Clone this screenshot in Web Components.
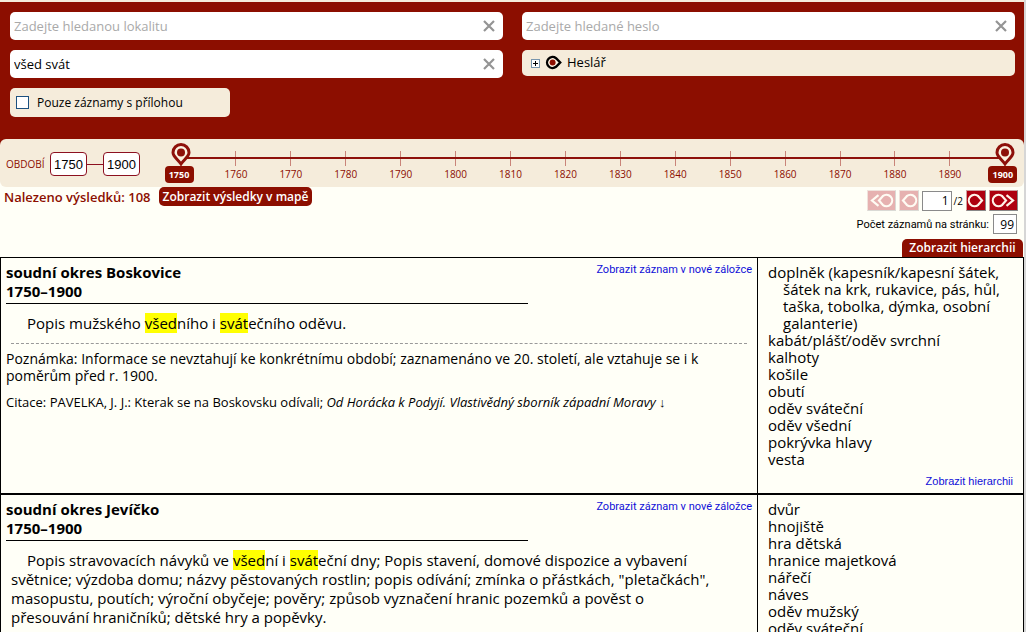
<!DOCTYPE html>
<html lang="cs">
<head>
<meta charset="utf-8">
<title>Výsledky hledání</title>
<style>
html { background: #d6d6d6; }
body { margin: 0 2px 0 0; height: 100vh; overflow: hidden; background: #fffff7; color: #000;
  font-family: "Open Sans", "Noto Sans", sans-serif; font-size: 15px; --red: #8c0e00; --cream: #f5ecdb; }
</style>
</head>
<body>
<archive-app></archive-app>
<script>
const define = (name, html, setup) => customElements.define(name, class extends HTMLElement {
  connectedCallback() {
    if (this.shadowRoot) return;
    const root = this.attachShadow({ mode: 'open' });
    root.innerHTML = '<style>*{box-sizing:border-box}:host{display:block}</style>' + html;
    if (setup) setup(this, root);
  }
});

define('search-field', `
<style>
.box { display: flex; align-items: center; height: 28px; padding: 0 6px 0 4px; background: #fff; border-radius: 5px; }
input { flex: 1; min-width: 0; border: 0; padding: 0; outline: 0; background: none; color: #000; font-family: inherit; font-size: 13px; }
input::placeholder { color: #a9a9a9; opacity: 1; }
button { display: flex; border: 0; padding: 0; background: none; }
</style>
<div class="box"><input type="text"><button type="button" aria-label="Vymazat">
<svg width="16" height="16" viewBox="0 0 16 16"><path d="M3 3l10 10m0-10l-10 10" stroke="#949494" stroke-width="2.2"/></svg></button></div>`,
(el, root) => {
  const input = root.querySelector('input');
  input.placeholder = el.getAttribute('placeholder') || '';
  input.setAttribute('aria-label', el.getAttribute('label'));
  input.value = el.getAttribute('value') || '';
});

define('thesaurus-tree', `
<style>
.box { display: flex; align-items: center; height: 26px; padding: 0 9px 2px; background: var(--cream); border-radius: 5px; font-size: 13px; }
button { display: flex; border: 0; padding: 2px 0 0; background: none; margin-right: 5px; }
svg + span { margin-left: 4px; }
</style>
<div class="box"><button type="button" aria-label="Rozbalit">
<svg width="9" height="9" viewBox="0 0 9 9" shape-rendering="crispEdges"><rect x=".5" y=".5" width="8" height="8" fill="#fff" stroke="#7896ae"/><path d="M2 4.5h5M4.5 2v5" stroke="#000"/></svg></button>
<svg width="18" height="15" viewBox="0 0 18 15"><path d="M11 3.200A5.500 5.500 0 1 0 11 11.800L15.200 7.500z" fill="#fff6e6" stroke="#000" stroke-width="2.400"/><circle cx="7.600" cy="7.500" r="3" fill="#8c0e00"/></svg>
<span>Heslář</span></div>`);

define('attachment-filter', `
<style>
:host { width: 220px; }
label { display: flex; align-items: center; height: 29px; padding: 0 6px; gap: 8px; background: var(--cream); border-radius: 5px; font-size: 12px; }
input { appearance: none; width: 13px; height: 13px; margin: 0; border: 1px solid #1c5180; background: #fff; }
</style>
<label><input type="checkbox"><slot></slot></label>`);

define('search-panel', `
<style>
:host { border-top: 2px solid var(--cream); background: var(--red); padding: 10px 9px 22px 10px; }
.grid { display: grid; grid-template-columns: 1fr 1fr; gap: 10px 19px; align-items: start; }
</style>
<div class="grid">
<search-field label="Lokalita" placeholder="Zadejte hledanou lokalitu"></search-field>
<search-field label="Heslo" placeholder="Zadejte hledané heslo"></search-field>
<search-field label="Text" value="všed svát"></search-field>
<thesaurus-tree></thesaurus-tree>
<attachment-filter>Pouze záznamy s přílohou</attachment-filter>
</div>`);

define('year-scale', `
<style>
:host { position: relative; height: 48px; color: var(--red); }
.line { position: absolute; left: 0; right: 0; top: 18px; height: 2px; background: #8e100a; }
.ticks { display: flex; justify-content: space-between; padding-top: 12px; }
.tick { width: 0; display: flex; flex-direction: column; align-items: center; }
.tick i { width: 1px; height: 15px; background: #c98479; }
.tick span { font-size: 10px; line-height: 16px; }
.end { position: relative; z-index: 1; }
.end button { display: flex; flex-direction: column; align-items: center; margin-top: -9px; border: 0; padding: 0; background: none; }
.end b { width: 29px; height: 17px; margin-right: 4px; border-radius: 4px; background: var(--red); color: #fff; font-family: "Open Sans", sans-serif; font-size: 9px; line-height: 17px; }
svg { display: block; }
</style>
<div class="line"></div><div class="ticks"></div>`,
(el, root) => {
  const pin = y => `<div class="tick end"><button type="button" aria-label="${y}"><svg width="22" height="24" viewBox="0 0 22 24"><path d="M11 2.500a8 8 0 0 0-8 8c0 4.200 4.700 6.700 8 11.500 3.300-4.800 8-7.300 8-11.500A8 8 0 0 0 11 2.500z" fill="#fbf1e1" stroke="#8e100a" stroke-width="3"/><circle cx="11" cy="10.500" r="4" fill="#8e100a"/></svg><b>${y}</b></button></div>`;
  let html = '';
  for (let y = 1750; y <= 1900; y += 10) {
    html += (y === 1750 || y === 1900) ? pin(y) : `<div class="tick"><i></i><span>${y}</span></div>`;
  }
  root.querySelector('.ticks').innerHTML = html;
});

define('period-bar', `
<style>
:host { background: linear-gradient(var(--red) 50%, transparent 50%); }
.bar { display: grid; grid-template-columns: 175px 1fr; height: 48px; padding: 0 19px 0 6px; background: var(--cream); border-radius: 6px; }
.range { display: flex; align-items: center; height: 50px; color: var(--red); font-size: 10px; }
label { width: 44px; }
input { width: 37px; height: 24px; border: 1px solid #8c1020; border-radius: 4px; padding: 0; background: #fff; text-align: center; font-family: "Liberation Sans", Arial, sans-serif; font-size: 13px; }
hr { width: 16px; margin: 0; border: 0; height: 1px; background: #8c1020; }
</style>
<div class="bar"><div class="range"><label for="from">OBDOBÍ</label><input id="from" value="1750"><hr><input aria-label="Období do" value="1900"></div><year-scale></year-scale></div>`);

define('page-button', `
<style>
:host { width: 20px; } :host([wide]) { width: 29px; } :host([off]) { opacity: .3; }
button { display: flex; align-items: center; justify-content: center; width: 100%; height: 21px; border: 1px solid; border-color: #cfa0a0 #888 #888 #cfa0a0; padding: 0; background: #ae000f; }
svg { flex: none; }
:host([back]) svg { transform: rotate(180deg); }
</style>
<button type="button"></button>`,
(el, root) => {
  const wide = el.hasAttribute('wide'), btn = root.querySelector('button'), w = wide ? 25 : 18;
  btn.disabled = el.hasAttribute('off');
  btn.setAttribute('aria-label', el.getAttribute('label'));
  btn.innerHTML = `<svg width="${w}" height="15" viewBox="0 0 ${w} 15" fill="none" stroke="#fff3ea" stroke-width="2.200"><path d="M11.300 3.200A5.700 5.700 0 1 0 11.300 11.800L15 7.500z"/>${wide ? '<path d="M15.500 2.200l6.500 5.300-6.500 5.300"/>' : ''}</svg>`;
});

define('results-bar', `
<style>
:host { font-size: 13px; }
.wrap { display: flex; justify-content: space-between; height: 70px; }
.left { display: flex; gap: 8px; height: 19px; align-items: center; padding-left: 4px; color: var(--red); font-weight: 600; }
button.red { border: 0; background: var(--red); color: #fff; font-family: "Open Sans", sans-serif; font-weight: 600; font-size: 12px; line-height: 18px; height: 19px; padding: 0 4px; border-radius: 5px; }
.right { display: flex; flex-direction: column; align-items: flex-end; padding-top: 3px; }
.pager { display: flex; align-items: center; gap: 3px; height: 21px; margin-right: 6px; font-size: 10px; }
input { height: 20px; border: 1px solid #8a8a8a; background: #fff; padding: 0 2px; text-align: right; font-family: "Open Sans", sans-serif; font-size: 12px; }
.now { width: 30px; } .cnt { width: 24px; }
.pager span { margin: 0 0 0 -1px; }
.count { display: flex; align-items: center; gap: 4px; height: 20px; margin: 3px 7px 5px 0; font-family: Roboto, sans-serif; font-size: 11px; }
button.tab { border-radius: 5px 5px 0 0; width: 121px; height: 18px; padding: 0; margin-right: 1px; }
</style>
<div class="wrap"><div class="left"><span>Nalezeno výsledků: 108</span><button class="red" type="button">Zobrazit výsledky v mapě</button></div>
<div class="right"><div class="pager"><page-button wide back off label="První"></page-button><page-button back off label="Předchozí"></page-button><input class="now" aria-label="Strana" value="1"><span>/2</span><page-button label="Další"></page-button><page-button wide label="Poslední"></page-button></div>
<div class="count"><label for="cnt">Počet záznamů na stránku:</label><input class="cnt" id="cnt" value="99"></div>
<button class="red tab" type="button">Zobrazit hierarchii</button></div></div>`);

define('hit-mark', `<style>:host { display: inline; background: #ff0; }</style><slot></slot>`);

define('record-card', `
<style>
:host { border: 1px solid #000; }
.row { display: grid; grid-template-columns: 1fr 266px; }
.main { padding: 5px 5px 0; }
.head { display: grid; grid-template-columns: 522px 1fr; line-height: 19px; }
h2 { margin: 0; padding-bottom: 2px; border-bottom: 1px solid #000; font-size: 15px; font-weight: 700; line-height: 19px; }
a { color: #1010d8; text-decoration: none; font-family: Roboto, sans-serif; font-size: 11px; line-height: 14px; white-space: nowrap; }
.new { justify-self: end; }
.side { display: flex; flex-direction: column; border-left: 1px solid #000; padding: 6px 10px 4px; font-size: 15px; line-height: 17px; }
.foot { align-self: flex-end; margin-top: 5px; line-height: 16px; font-family: "Liberation Sans", Arial, sans-serif; }
</style>
<div class="row"><div class="main"><div class="head"><h2><slot name="place"></slot><br>1750–1900</h2><a class="new" href="#">Zobrazit záznam v nové záložce</a></div><slot></slot></div>
<div class="side"><slot name="terms"></slot><a class="foot" href="#">Zobrazit hierarchii</a></div></div>`);

define('term-item', `<style>:host { padding-left: 15px; text-indent: -15px; white-space: nowrap; }</style><slot></slot>`);
define('record-text', `<style>:host { margin: 10px 10px 0 5px; font-size: 15px; line-height: 19px; text-indent: 16px; white-space: nowrap; }</style><slot></slot>`);
define('record-note', `<style>:host { font-size: 14px; line-height: 17px; } .n { white-space: nowrap; } hr { margin: 10px 5px 6px; border: 0; border-top: 1px dashed #999; }</style><hr><div class="n"><slot></slot></div>`);
define('record-cite', `<style>:host { margin-top: 10px; font-size: 13px; line-height: 17px; white-space: nowrap; }</style><span><slot></slot></span>`);

define('archive-app', `
<search-panel></search-panel><period-bar></period-bar><results-bar></results-bar>
<record-card><span slot="place">soudní okres Boskovice</span>
<record-text>Popis mužského <hit-mark>všed</hit-mark>ního i <hit-mark>svát</hit-mark>ečního oděvu.</record-text>
<record-note>Poznámka: Informace se nevztahují ke konkrétnímu období; zaznamenáno ve 20. století, ale vztahuje se i k<br>poměrům před r. 1900.</record-note>
<record-cite>Citace: PAVELKA, J. J.: Kterak se na Boskovsku odívali; <i>Od Horácka k Podyjí. Vlastivědný sborník západní Moravy</i> ↓</record-cite>
<div slot="terms"><term-item>doplněk (kapesník/kapesní šátek,<br>šátek na krk, rukavice, pás, hůl,<br>taška, tobolka, dýmka, osobní<br>galanterie)</term-item><term-item>kabát/plášť/oděv svrchní</term-item><term-item>kalhoty</term-item><term-item>košile</term-item><term-item>obutí</term-item><term-item>oděv sváteční</term-item><term-item>oděv všední</term-item><term-item>pokrývka hlavy</term-item><term-item>vesta</term-item></div></record-card>
<record-card><span slot="place">soudní okres Jevíčko</span>
<record-text>Popis stravovacích návyků ve <hit-mark>všed</hit-mark>ní i <hit-mark>svát</hit-mark>eční dny; Popis stavení, domové dispozice a vybavení<br>světnice; výzdoba domu; názvy pěstovaných rostlin; popis odívání; zmínka o přástkách, "pletačkách",<br>masopustu, poutích; výroční obyčeje; pověry; způsob vyznačení hranic pozemků a pověst o<br>přesouvání hraničníků; dětské hry a popěvky.</record-text>
<div slot="terms"><term-item>dvůr</term-item><term-item>hnojiště</term-item><term-item>hra dětská</term-item><term-item>hranice majetková</term-item><term-item>nářečí</term-item><term-item>náves</term-item><term-item>oděv mužský</term-item><term-item>oděv sváteční</term-item></div></record-card>`);
</script>
</body>
</html>
